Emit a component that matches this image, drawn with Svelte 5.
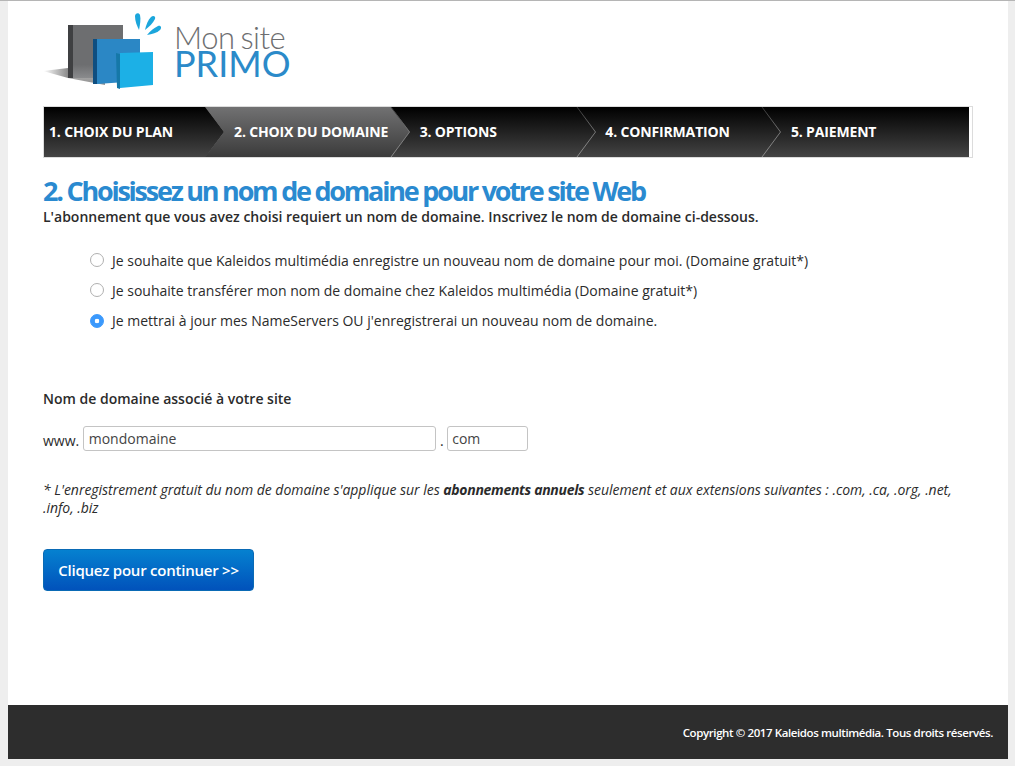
<script>
    const steps = [
        { label: '1. CHOIX DU PLAN' },
        { label: '2. CHOIX DU DOMAINE', active: true },
        { label: '3. OPTIONS' },
        { label: '4. CONFIRMATION' },
        { label: '5. PAIEMENT', last: true }
    ]

    const choices = [
        { text: 'Je souhaite que Kaleidos multimédia enregistre un nouveau nom de domaine pour moi. (Domaine gratuit*)' },
        { text: 'Je souhaite transférer mon nom de domaine chez Kaleidos multimédia (Domaine gratuit*)' },
        { text: "Je mettrai à jour mes NameServers OU j'enregistrerai un nouveau nom de domaine.", checked: true }
    ]
</script>

<div class="top">
    <div class="page">
        <header class="logo">
            <svg width="260" height="92" viewBox="0 0 260 92" aria-hidden="true">
                <defs>
                    <linearGradient id="shadow" x1="0" x2="1" y1="0" y2="0">
                        <stop offset="0" stop-color="#fff" />
                        <stop offset="1" stop-color="#8a8a8a" />
                    </linearGradient>
                    <linearGradient id="shadow2" x1="0" x2="0" y1="0" y2="1">
                        <stop offset="0" stop-color="#777" />
                        <stop offset="1" stop-color="#222" />
                    </linearGradient>
                    <linearGradient id="dark" x1="0" x2="0" y1="0" y2="1">
                        <stop offset="0" stop-color="#6d6e70" />
                        <stop offset="0.75" stop-color="#6d6e70" />
                        <stop offset="1" stop-color="#8a8b8d" />
                    </linearGradient>
                </defs>
                <polygon points="0,70 25,67 25,77" fill="url(#shadow)" />
                <polygon points="25,67 62,77 62,84 25,77" fill="url(#shadow2)" opacity="0.5" />
                <polygon points="25,24 30,24 30,77 25,77" fill="#3f4042" />
                <polygon points="30,24 80,24 80,77 30,77" fill="url(#dark)" />
                <polygon points="50,38 54,38 54,83 50,83" fill="#0f4e80" />
                <polygon points="54,38 97,38 97,80 54,83" fill="#2b87c5" />
                <polygon points="73,52 77,53 77,88 74,87" fill="#1578a8" />
                <polygon points="77,52 110,51 110,84 77,87" fill="#1cb0e6" />
                <path d="M96 29 C94 25 92 20 92 15 C92 12 96 11 97 14 C98 18 97 24 96 29Z" fill="#1ba6dc" />
                <path d="M102 29 C103 24 105 19 108 16 C110 14 113 15 112 18 C110 22 106 26 102 29Z" fill="#1ba6dc" />
                <path d="M104 34 C107 30 111 27 115 25 C118 24 119 27 117 29 C114 32 109 33 104 34Z" fill="#1ba6dc" />
                <text x="131" y="48" class="mon">Mon site</text>
                <text x="131" y="76" class="primo">PRIMO</text>
            </svg>
        </header>

        <nav class="steps">
            {#each steps as step}
                <div class="step" class:active={step.active}>
                    {#if step.active}
                        <svg class="shape" width="206" height="50" viewBox="0 0 206 50" aria-hidden="true">
                            <defs>
                                <linearGradient id="activeFill" x1="0" x2="0" y1="0" y2="1">
                                    <stop offset="0" stop-color="#717172" />
                                    <stop offset="1" stop-color="#3b3b3b" />
                                </linearGradient>
                            </defs>
                            <polygon points="0,0 186,0 205,25 186,50 0,50 19,25" fill="url(#activeFill)" />
                        </svg>
                    {/if}
                    <span>{step.label}</span>
                    {#if !step.last}
                        <svg class="chevron" width="22" height="50" viewBox="0 0 22 50" aria-hidden="true">
                            <defs>
                                <linearGradient id="line" x1="0" x2="0" y1="0" y2="50" gradientUnits="userSpaceOnUse">
                                    <stop offset="0" stop-color="#333" />
                                    <stop offset="0.5" stop-color="#777" />
                                    <stop offset="1" stop-color="#8a8a8a" />
                                </linearGradient>
                            </defs>
                            <polyline points="1,0 19.5,25 1,50" fill="none" stroke="url(#line)" stroke-width="1" />
                        </svg>
                    {/if}
                </div>
            {/each}
        </nav>

        <main class="content">
            <h1>2. Choisissez un nom de domaine pour votre site Web</h1>
            <p class="intro">L'abonnement que vous avez choisi requiert un nom de domaine. Inscrivez le nom de domaine ci-dessous.</p>

            <div class="choices">
                {#each choices as choice}
                    <label class="choice">
                        <input type="radio" name="domain" checked={choice.checked} />
                        <span>{choice.text}</span>
                    </label>
                {/each}
            </div>

            <h2>Nom de domaine associé à votre site</h2>

            <div class="domain">
                <span class="www">www.</span>
                <input class="name" type="text" value="mondomaine" />
                <span class="dot">.</span>
                <input class="ext" type="text" value="com" />
            </div>

            <p class="note">* L'enregistrement gratuit du nom de domaine s'applique sur les <b>abonnements annuels</b> seulement et aux extensions suivantes : .com, .ca, .org, .net, .info, .biz</p>

            <button type="button" class="next">Cliquez pour continuer &gt;&gt;</button>
        </main>

        <footer>Copyright © 2017 Kaleidos multimédia. Tous droits réservés.</footer>
    </div>
</div>

<style>
:global(body) {
    background-color: #eeeeee;
    color: #2b2b2b;
    font-family: "Open Sans", "Liberation Sans", sans-serif;
    font-size: 14px;
}

.top {
    border-top: 1px solid #b5b5b5;
}

.page {
    background-color: #fff;
    box-sizing: border-box;
    display: flex;
    flex-direction: column;
    height: 758px;
    margin: 0 7px 0 8px;
}

.logo {
    height: 105px;
    padding-left: 35px;
}

.logo svg {
    display: block;
}

.mon {
    fill: #6d6e70;
    font-family: Lato, sans-serif;
    font-size: 31px;
    font-weight: 300;
    letter-spacing: -0.5px;
    word-spacing: -2px;
}

.primo {
    fill: #2b8ac9;
    font-family: Lato, sans-serif;
    font-size: 36px;
    font-weight: 400;
}

.steps {
    background: linear-gradient(#000, #444) content-box;
    border: 1px solid #dcdcdc;
    box-sizing: border-box;
    display: flex;
    height: 52px;
    margin: 0 35px;
    padding-right: 3px;
}

.step {
    align-items: center;
    box-sizing: border-box;
    color: #fff;
    display: flex;
    flex: 0 0 185.6px;
    font-size: 14px;
    font-weight: 700;
    height: 50px;
    letter-spacing: -0.15px;
    padding: 0 0 2px 5.5px;
    position: relative;
}

.step:first-child {
    flex-basis: 184.6px;
    padding-left: 5px;
}

.step span {
    position: relative;
    z-index: 2;
}

.shape {
    left: -24px;
    position: absolute;
    top: 0;
    z-index: 1;
}

.chevron {
    position: absolute;
    right: 2px;
    top: 0;
    z-index: 1;
}

.content {
    flex: 1;
    padding: 0 35px;
}

h1 {
    color: #2a8ad0;
    font-size: 27px;
    font-weight: 700;
    letter-spacing: -2.24px;
    line-height: 35px;
    margin: 15px 0 0;
}

.intro {
    font-size: 14px;
    font-weight: 600;
    line-height: 17px;
    margin: 0;
}

.choices {
    display: flex;
    flex-direction: column;
    gap: 10px;
    margin: 25px 0 0 47px;
}

.choice {
    align-items: center;
    display: flex;
    gap: 8px;
    height: 20.3px;
}

input[type="radio"] {
    appearance: none;
    background: #fff;
    border: 1px solid #b0b0b0;
    border-radius: 50%;
    box-sizing: border-box;
    height: 14px;
    margin: 0;
    width: 14px;
}

input[type="radio"]:checked {
    background: radial-gradient(circle, #fff 0 2px, #3b99fc 2.6px);
    border-color: #3b99fc;
}

h2 {
    font-size: 14px;
    font-weight: 600;
    line-height: 20px;
    margin: 58px 0 0;
}

.domain {
    align-items: center;
    display: flex;
    margin-top: 17px;
}

.www {
    margin-right: 4px;
    padding-top: 5px;
}

.dot {
    padding-top: 5px;
    text-align: center;
    width: 11px;
}

.domain input {
    border: 1px solid #c4c4c4;
    border-radius: 3px;
    box-sizing: border-box;
    color: #444;
    font-family: inherit;
    font-size: 14px;
    height: 25px;
    outline: none;
}

.name {
    padding: 0 4.5px;
    width: 353px;
}

.ext {
    padding: 0 4px;
    width: 81px;
}

.note {
    font-size: 14px;
    font-style: italic;
    letter-spacing: -0.03px;
    line-height: 18px;
    margin: 30px 0 0;
}

.note b {
    letter-spacing: -0.3px;
}

.next {
    background: linear-gradient(#0581d0, #0152bb);
    border: 1px solid #0a6ab5;
    border-radius: 4px;
    color: #fff;
    cursor: pointer;
    display: block;
    font-family: inherit;
    font-size: 15px;
    font-weight: 600;
    height: 42px;
    letter-spacing: -0.23px;
    margin-top: 32px;
    padding: 0;
    width: 211px;
}

footer {
    align-items: center;
    background-color: #2d2d2d;
    box-sizing: border-box;
    color: #fff;
    display: flex;
    font-size: 11.5px;
    font-weight: 600;
    height: 54px;
    justify-content: flex-end;
    letter-spacing: -0.4px;
    padding: 0 15px 0 0;
}
</style>
